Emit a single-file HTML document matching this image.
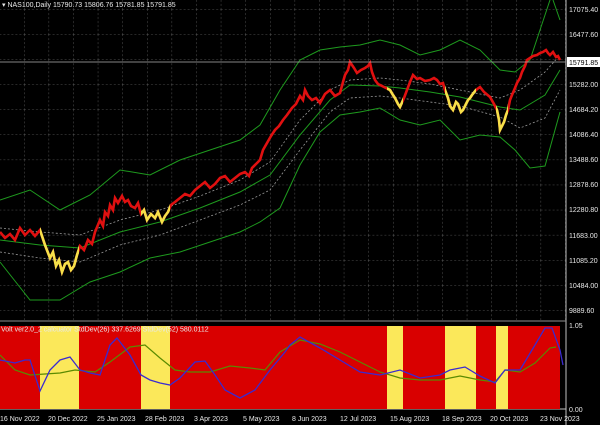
<!DOCTYPE html><html><head><style>
body{margin:0;background:#000;width:600px;height:425px;overflow:hidden;font-family:"Liberation Sans",sans-serif}
svg{position:absolute;left:0;top:0}
</style></head><body>
<svg width="600" height="425" viewBox="0 0 600 425">
<defs>
<pattern id="g" width="24.6" height="25.1" patternUnits="userSpaceOnUse" x="-0.6" y="9">
<path d="M0 0V25.1M0 0H24.6" stroke="#6a6a6a" stroke-width="0.8" stroke-dasharray="2,2" fill="none"/></pattern>
<clipPath id="y1"><rect x="40" y="0" width="39" height="320"/><rect x="141" y="0" width="29" height="320"/><rect x="387" y="0" width="16" height="320"/><rect x="445" y="0" width="31" height="320"/><rect x="496" y="0" width="12" height="320"/></clipPath>
</defs>
<rect x="0" y="0" width="566" height="320" fill="url(#g)"/>
<g fill="none">
<polyline stroke="#1e9a1e" stroke-width="1" points="0,200 30,190 60,210 90,195 120,170 150,175 180,160 210,150 240,140 260,125 280,90 300,60 320,50 340,47 360,45 380,40 400,45 420,55 440,50 460,40 480,50 500,70 515,72 530,60 545,15 550,0"/>
<polyline stroke="#1e9a1e" stroke-width="1" points="553,0 560,20"/>
<polyline stroke="#1e9a1e" stroke-width="1" points="0,262 30,300 60,300 90,282 120,272 150,258 180,252 210,242 240,232 260,222 280,208 300,165 320,132 340,115 360,112 380,108 400,120 420,125 440,120 460,140 480,135 500,137 515,150 530,168 545,166 560,112"/>
<polyline stroke="#1e9a1e" stroke-width="1" points="0,240 40,245 80,248 120,232 160,222 200,208 240,192 270,175 300,135 330,100 350,85 380,86 400,88 430,92 460,97 500,107 520,110 545,95 560,70"/>
<polyline stroke="#999" stroke-width="0.8" stroke-dasharray="2,2" points="0,228 40,232 80,235 120,220 160,210 200,196 240,180 270,162 300,120 330,90 350,80 380,78 400,80 430,84 460,90 500,98 520,90 545,72 560,55"/>
<polyline stroke="#999" stroke-width="0.8" stroke-dasharray="2,2" points="0,252 40,258 80,262 120,245 160,235 200,220 240,205 270,190 300,150 330,112 350,98 380,96 400,98 430,102 460,106 500,117 520,128 545,118 560,90"/>
</g>
<g fill="none" stroke-width="2.6" stroke-linejoin="miter">
<polyline id="p" stroke="#e01010" points="0,232 5,238 10,234 15,240 20,228 25,235 30,230 35,236 40,230 45,245 50,258 53,252 56,266 59,260 62,272 65,264 68,262 71,270 74,266 77,255 80,246 84,250 88,240 92,244 95,232 100,220 103,226 105,212 108,216 110,205 113,210 115,198 118,203 122,196 125,202 128,200 131,206 135,208 138,203 141,214 144,210 147,220 151,214 155,218 158,212 162,222 165,216 168,212 171,205 175,202 180,198 185,194 190,196 195,190 200,186 205,182 210,188 215,184 220,178 225,176 230,182 235,178 240,174 245,172 249,176 252,168 256,164 260,160 263,150 267,143 271,136 275,130 279,126 283,120 287,115 292,108 296,104 300,96 303,100 305,90 308,96 312,100 316,98 320,103 325,94 330,90 335,96 340,93 343,82 345,75 348,70 350,62 354,68 357,73 361,70 365,68 368,66 370,63 372,72 375,80 378,84 382,86 386,88 390,90 393,95 395,98 398,104 400,107 404,98 407,90 410,82 413,75 417,79 420,78 425,81 430,80 434,78 437,80 440,84 443,83 445,90 448,98 450,106 453,110 456,102 458,104 461,112 463,110 466,104 468,100 470,98 472,95 476,90 480,87 484,92 490,97 494,104 497,110 499,120 500,130 502,126 504,122 506,115 508,110 510,100 512,95 515,88 517,83 520,78 522,72 525,66 527,60 530,58 533,56 537,55 540,53 543,52 546,50 548,53 550,55 553,52 556,57 558,56 560,60"/>
<g clip-path="url(#y1)"><polyline stroke="#f5e04a" points="0,232 5,238 10,234 15,240 20,228 25,235 30,230 35,236 40,230 45,245 50,258 53,252 56,266 59,260 62,272 65,264 68,262 71,270 74,266 77,255 80,246 84,250 88,240 92,244 95,232 100,220 103,226 105,212 108,216 110,205 113,210 115,198 118,203 122,196 125,202 128,200 131,206 135,208 138,203 141,214 144,210 147,220 151,214 155,218 158,212 162,222 165,216 168,212 171,205 175,202 180,198 185,194 190,196 195,190 200,186 205,182 210,188 215,184 220,178 225,176 230,182 235,178 240,174 245,172 249,176 252,168 256,164 260,160 263,150 267,143 271,136 275,130 279,126 283,120 287,115 292,108 296,104 300,96 303,100 305,90 308,96 312,100 316,98 320,103 325,94 330,90 335,96 340,93 343,82 345,75 348,70 350,62 354,68 357,73 361,70 365,68 368,66 370,63 372,72 375,80 378,84 382,86 386,88 390,90 393,95 395,98 398,104 400,107 404,98 407,90 410,82 413,75 417,79 420,78 425,81 430,80 434,78 437,80 440,84 443,83 445,90 448,98 450,106 453,110 456,102 458,104 461,112 463,110 466,104 468,100 470,98 472,95 476,90 480,87 484,92 490,97 494,104 497,110 499,120 500,130 502,126 504,122 506,115 508,110 510,100 512,95 515,88 517,83 520,78 522,72 525,66 527,60 530,58 533,56 537,55 540,53 543,52 546,50 548,53 550,55 553,52 556,57 558,56 560,60"/></g>
</g>
<line x1="0" y1="62" x2="566" y2="62" stroke="#b0b0b0" stroke-width="0.8"/>
<line x1="566" y1="0" x2="566" y2="425" stroke="#c0c0c0" stroke-width="1"/>
<line x1="0" y1="321" x2="566" y2="321" stroke="#909090" stroke-width="1"/>
<line x1="0" y1="409" x2="566" y2="409" stroke="#c0c0c0" stroke-width="1"/>
<rect x="0" y="326" width="560" height="83" fill="#d90000"/>
<g fill="#fbe85a"><rect x="40" y="326" width="39" height="83"/><rect x="141" y="326" width="29" height="83"/><rect x="387" y="326" width="16" height="83"/><rect x="445" y="326" width="31" height="83"/><rect x="496" y="326" width="12" height="83"/></g>
<polyline fill="none" stroke="#5a8a00" stroke-width="1.2" points="0,355 15,370 30,375 60,373 75,370 95,372 110,362 130,347 145,345 160,358 175,370 190,372 210,372 230,366 250,368 265,370 280,352 300,340 320,344 340,352 360,362 380,372 400,378 420,380 440,380 460,376 480,380 495,382 505,370 520,372 535,363 550,348 556,347"/>
<polyline fill="none" stroke="#3a2ad0" stroke-width="1.3" points="0,360 15,363 25,360 30,360 40,391 50,370 60,360 70,357 80,370 90,373 100,375 110,345 117,338 130,355 141,375 150,380 160,383 170,385 180,378 195,362 205,361 215,375 225,390 240,398 255,390 270,370 285,352 290,345 300,337 320,348 340,360 360,372 380,375 400,370 420,378 440,375 450,370 465,367 480,376 495,383 505,370 520,370 535,345 545,328 552,328 560,350 563,365"/>
<g font-size="7" fill="#e8e8e8">
<text x="2" y="7">▾ NAS100,Daily  15790.73 15806.76 15781.85 15791.85</text>
<text x="1" y="331.5">Volt ver2.0_2 calcuator StdDev(26) 337.6269 StdDev(52) 580.0112</text>
<text x="569" y="12">17075.40</text><text x="569" y="37">16477.60</text>
<text x="569" y="87">15282.00</text><text x="569" y="112">14684.20</text><text x="569" y="137">14086.40</text>
<text x="569" y="162">13488.60</text><text x="569" y="187">12878.60</text><text x="569" y="212">12280.80</text>
<text x="569" y="238">11683.00</text><text x="569" y="263">11085.20</text><text x="569" y="288">10484.00</text>
<text x="569" y="313">9889.60</text><text x="569" y="328">1.05</text><text x="569" y="412">0.00</text>
<text x="0" y="421">16 Nov 2022</text><text x="48" y="421">20 Dec 2022</text><text x="97" y="421">25 Jan 2023</text>
<text x="145" y="421">28 Feb 2023</text><text x="194" y="421">3 Apr 2023</text><text x="243" y="421">5 May 2023</text>
<text x="292" y="421">8 Jun 2023</text><text x="340" y="421">12 Jul 2023</text><text x="390" y="421">15 Aug 2023</text>
<text x="442" y="421">18 Sep 2023</text><text x="490" y="421">20 Oct 2023</text><text x="540" y="421">23 Nov 2023</text>
</g>
<rect x="567" y="57" width="33" height="10" fill="#fff"/>
<text x="569" y="65" font-size="7" fill="#000">15791.85</text>
</svg>
</body></html>
